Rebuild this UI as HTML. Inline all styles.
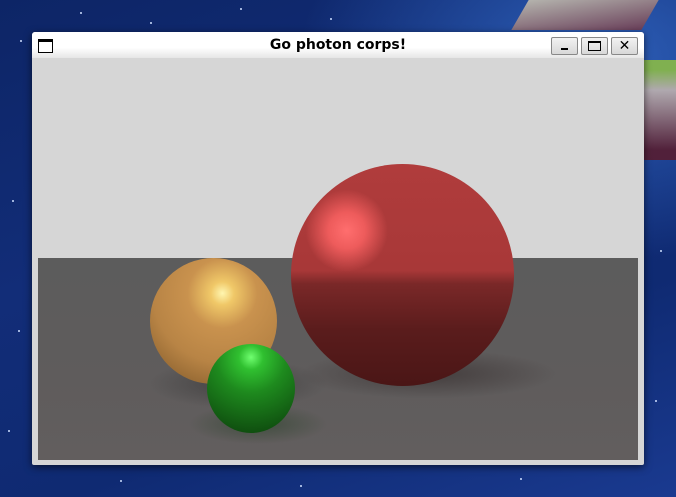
<!DOCTYPE html>
<html><head><style>
html,body{margin:0;padding:0}
body{width:676px;height:497px;overflow:hidden;position:relative;
background:radial-gradient(ellipse 300px 200px at 600px 60px,#2d5fb8,transparent),linear-gradient(160deg,#0d2566 0%,#122d78 40%,#0f2a72 70%,#1a3a90 100%);font-family:"DejaVu Sans","Liberation Sans",sans-serif}
.star{position:absolute;width:2px;height:2px;background:#cfe0ff;border-radius:1px}
.win{position:absolute;left:32px;top:32px;width:612px;height:433px;background:#d6d6d6;box-shadow:0 2px 8px rgba(0,0,0,.6);border-radius:3px 3px 2px 2px}
.tb{position:absolute;left:0;top:0;width:612px;height:26px;background:linear-gradient(#fff 60%,#e6e6e6);border-radius:3px 3px 0 0}
.title{position:absolute;left:0;right:0;top:5px;text-align:center;font-weight:bold;font-size:14px;color:#000}
.ico{position:absolute;left:6px;top:7px;width:13px;height:10px;border:1.5px solid #000;border-top-width:3px;background:#fff}
.btn{position:absolute;top:5px;width:25px;height:16px;border:1px solid #888;background:linear-gradient(#f2f2f2,#d8d8d8);border-radius:2px}
.scene{position:absolute;left:6px;top:27px;width:600px;height:401px;background:#d6d6d6;overflow:hidden}
.floor{position:absolute;left:0;top:199px;width:600px;height:202px;background:linear-gradient(#5c5c5c,#5f5c5c 60%,#625e5e)}
.sph{position:absolute;border-radius:50%}
</style></head><body>
<div class="star" style="left:20px;top:40px"></div><div class="star" style="left:80px;top:12px"></div><div class="star" style="left:150px;top:22px"></div><div class="star" style="left:240px;top:8px"></div><div class="star" style="left:330px;top:18px"></div><div class="star" style="left:12px;top:200px"></div><div class="star" style="left:18px;top:330px"></div><div class="star" style="left:8px;top:430px"></div><div class="star" style="left:120px;top:480px"></div><div class="star" style="left:300px;top:485px"></div><div class="star" style="left:520px;top:478px"></div><div class="star" style="left:660px;top:250px"></div><div class="star" style="left:655px;top:400px"></div>
<div style="position:absolute;left:520px;top:0;width:130px;height:30px;background:linear-gradient(170deg,#d8ccb0,#7a3a45);transform:skewX(-30deg);opacity:.8"></div>
<div style="position:absolute;left:644px;top:60px;width:32px;height:100px;background:linear-gradient(#90c040 10%,#c8b8b0 30%,#5a1a2a 90%);opacity:.85"></div>
<div class="win">
<div class="tb"><div class="ico"></div><div class="title">Go photon corps!</div>
<div class="btn" style="left:519px"><div style="position:absolute;left:9px;top:10px;width:7px;height:2px;background:#000"></div></div>
<div class="btn" style="left:549px"><div style="position:absolute;left:6px;top:3px;width:11px;height:7px;border:1.5px solid #000;border-top-width:2.5px"></div></div>
<div class="btn" style="left:579px;font-size:14px;font-weight:bold;text-align:center;line-height:16px">✕</div>
</div>
<div class="scene">
<div class="floor"></div>
<div style="position:absolute;left:110px;top:300px;width:180px;height:50px;border-radius:50%;background:radial-gradient(rgba(40,40,40,.5),transparent 70%)"></div>
<div style="position:absolute;left:150px;top:345px;width:140px;height:40px;border-radius:50%;background:radial-gradient(rgba(30,60,30,.5),transparent 70%)"></div>
<div style="position:absolute;left:260px;top:290px;width:260px;height:50px;border-radius:50%;background:radial-gradient(rgba(40,30,30,.5),transparent 70%)"></div>
<div class="sph" style="left:253px;top:105px;width:223px;height:222px;background:radial-gradient(circle at 25% 30%,rgba(255,110,110,1) 0,rgba(245,95,95,.9) 8%,rgba(180,60,60,0) 18%),linear-gradient(#b03c3c 0%,#a83838 48%,#7a2828 54%,#5a1c1c 75%,#4a1616 100%)"></div>
<div class="sph" style="left:253px;top:105px;width:223px;height:222px;background:radial-gradient(circle at 50% 50%,transparent 80%,rgba(50,10,10,.35) 100%)"></div>
<div class="sph" style="left:112px;top:199px;width:127px;height:126px;background:radial-gradient(circle at 57% 28%,#fff6b0 0,#f0c868 10%,#c9924e 30%,#b88445 60%,#7a5426 100%)"></div>
<div class="sph" style="left:169px;top:285px;width:88px;height:89px;background:radial-gradient(circle at 50% 15%,#70ff70 0,#30c030 14%,#1e8a1e 40%,#0e4a0e 90%)"></div>
</div>
</div>
</body></html>
